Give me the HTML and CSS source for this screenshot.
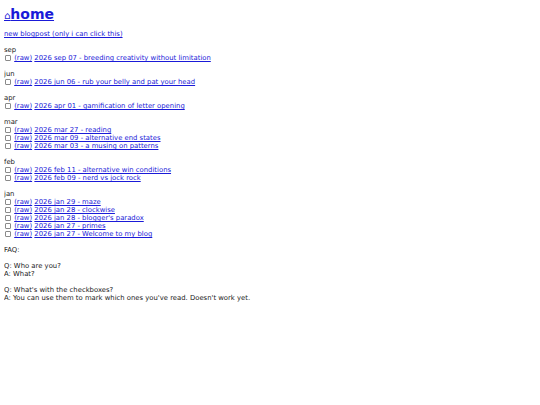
FILE: index.html
```html
<!DOCTYPE html>
<html>
<head>
<meta charset="utf-8">
<link rel="stylesheet" href="styles.css">
</head>
<body>
<h1 class="title"><a href="#"><span class="house">⌂</span>home</a></h1>
<p class="block"><a href="#">new blogpost (only i can click this)</a></p>

<div class="group">
  <div class="month">sep</div>
  <div class="row"><input type="checkbox" class="cb"> <a href="#">(raw)</a> <a href="#">2026 sep 07 - breeding creativity without limitation</a></div>
</div>
<div class="group">
  <div class="month">jun</div>
  <div class="row"><input type="checkbox" class="cb"> <a href="#">(raw)</a> <a href="#">2026 jun 06 - rub your belly and pat your head</a></div>
</div>
<div class="group">
  <div class="month">apr</div>
  <div class="row"><input type="checkbox" class="cb"> <a href="#">(raw)</a> <a href="#">2026 apr 01 - gamification of letter opening</a></div>
</div>
<div class="group">
  <div class="month">mar</div>
  <div class="row"><input type="checkbox" class="cb"> <a href="#">(raw)</a> <a href="#">2026 mar 27 - reading</a></div>
  <div class="row"><input type="checkbox" class="cb"> <a href="#">(raw)</a> <a href="#">2026 mar 09 - alternative end states</a></div>
  <div class="row"><input type="checkbox" class="cb"> <a href="#">(raw)</a> <a href="#">2026 mar 03 - a musing on patterns</a></div>
</div>
<div class="group">
  <div class="month">feb</div>
  <div class="row"><input type="checkbox" class="cb"> <a href="#">(raw)</a> <a href="#">2026 feb 11 - alternative win conditions</a></div>
  <div class="row"><input type="checkbox" class="cb"> <a href="#">(raw)</a> <a href="#">2026 feb 09 - nerd vs jock rock</a></div>
</div>
<div class="group">
  <div class="month">jan</div>
  <div class="row"><input type="checkbox" class="cb"> <a href="#">(raw)</a> <a href="#">2026 jan 29 - maze</a></div>
  <div class="row"><input type="checkbox" class="cb"> <a href="#">(raw)</a> <a href="#">2026 jan 28 - clockwise</a></div>
  <div class="row"><input type="checkbox" class="cb"> <a href="#">(raw)</a> <a href="#">2026 jan 28 - blogger's paradox</a></div>
  <div class="row"><input type="checkbox" class="cb"> <a href="#">(raw)</a> <a href="#">2026 jan 27 - primes</a></div>
  <div class="row"><input type="checkbox" class="cb"> <a href="#">(raw)</a> <a href="#">2026 jan 27 - Welcome to my blog</a></div>
</div>

<div class="group">FAQ:</div>
<div class="group">
  <div>Q: Who are you?</div>
  <div>A: What?</div>
</div>
<div class="group">
  <div>Q: What's with the checkboxes?</div>
  <div>A: You can use them to mark which ones you've read. Doesn't work yet.</div>
</div>
</body>
</html>
```
FILE: styles.css
```css
html { background: #fff; }
body {
  margin: 4px;
  font-family: "DejaVu Sans", Verdana, sans-serif;
  font-size: 6.85px;
  line-height: 8px;
  color: #222;
}
a { color: #1a1ad8; }
.title {
  font-size: 14px;
  line-height: 16px;
  margin: 2px 0 6px;
  font-weight: bold;
}
.house {
  font-weight: normal;
  font-size: 10px;
}
.block { margin: 0 0 8px; }
.group { margin-bottom: 8px; }
.row { white-space: nowrap; }
.cb {
  appearance: none;
  -webkit-appearance: none;
  display: inline-block;
  box-sizing: border-box;
  width: 6px;
  height: 6px;
  margin: 0 1px 0 1px;
  border: 1px solid #8a8a8a;
  border-radius: 1px;
  vertical-align: -0.5px;
  background: #fff;
}
```
